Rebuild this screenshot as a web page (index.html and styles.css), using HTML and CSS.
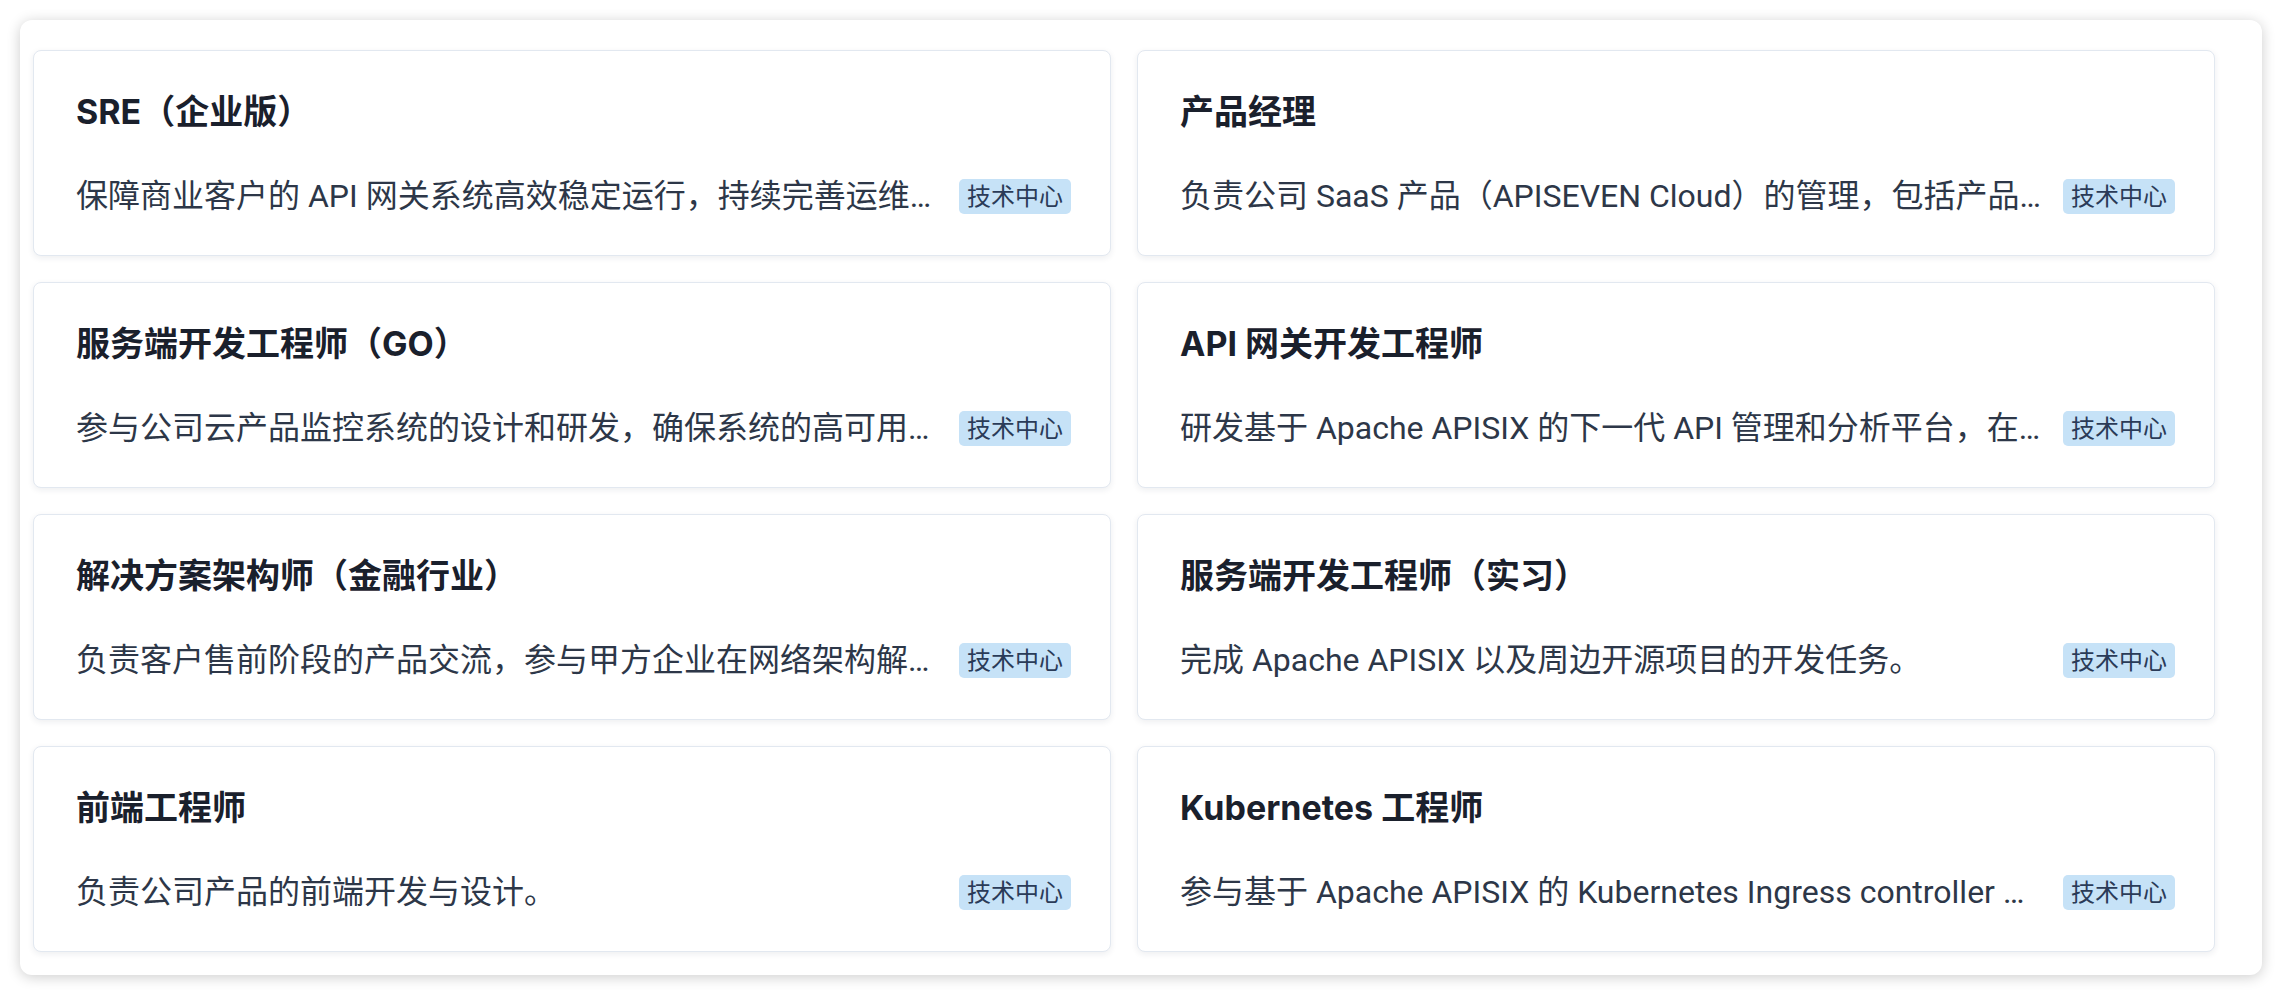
FILE: index.html
```html
<!DOCTYPE html>
<html lang="zh-CN">
<head>
<meta charset="utf-8">
<title>职位列表</title>
<link rel="stylesheet" href="styles.css">
</head>
<body>
<div class="panel">
  <div class="jobs">
    <a class="job" href="#">
      <h3 class="job-title">SRE（企业版）</h3>
      <div class="job-row">
        <p class="job-desc">保障商业客户的 API 网关系统高效稳定运行，持续完善运维体系，提升系统的可观测性与自动化水平。</p>
        <span class="tag">技术中心</span>
      </div>
    </a>
    <a class="job" href="#">
      <h3 class="job-title">产品经理</h3>
      <div class="job-row">
        <p class="job-desc">负责公司 SaaS 产品（APISEVEN Cloud）的管理，包括产品规划、需求分析与迭代推进。</p>
        <span class="tag">技术中心</span>
      </div>
    </a>
    <a class="job" href="#">
      <h3 class="job-title">服务端开发工程师（GO）</h3>
      <div class="job-row">
        <p class="job-desc">参与公司云产品监控系统的设计和研发，确保系统的高可用、高性能与可扩展性。</p>
        <span class="tag">技术中心</span>
      </div>
    </a>
    <a class="job" href="#">
      <h3 class="job-title">API 网关开发工程师</h3>
      <div class="job-row">
        <p class="job-desc">研发基于 Apache APISIX 的下一代 API 管理和分析平台，在云原生场景下持续演进。</p>
        <span class="tag">技术中心</span>
      </div>
    </a>
    <a class="job" href="#">
      <h3 class="job-title">解决方案架构师（金融行业）</h3>
      <div class="job-row">
        <p class="job-desc">负责客户售前阶段的产品交流，参与甲方企业在网络架构解决方案上的设计与落地。</p>
        <span class="tag">技术中心</span>
      </div>
    </a>
    <a class="job" href="#">
      <h3 class="job-title">服务端开发工程师（实习）</h3>
      <div class="job-row">
        <p class="job-desc">完成 Apache APISIX 以及周边开源项目的开发任务。</p>
        <span class="tag">技术中心</span>
      </div>
    </a>
    <a class="job" href="#">
      <h3 class="job-title">前端工程师</h3>
      <div class="job-row">
        <p class="job-desc">负责公司产品的前端开发与设计。</p>
        <span class="tag">技术中心</span>
      </div>
    </a>
    <a class="job" href="#">
      <h3 class="job-title">Kubernetes 工程师</h3>
      <div class="job-row">
        <p class="job-desc">参与基于 Apache APISIX 的 Kubernetes Ingress controller 的设计与开发工作。</p>
        <span class="tag">技术中心</span>
      </div>
    </a>
  </div>
</div>
</body>
</html>
```

FILE: styles.css
```css
* {
  box-sizing: border-box;
}

html, body {
  margin: 0;
  padding: 0;
  background: #ffffff;
}

body {
  font-family: "Inter", "Noto Sans CJK SC", sans-serif;
  color: #1a202c;
  padding: 20px 20px 20px 20px;
}

.panel {
  background: #ffffff;
  border-radius: 12px;
  box-shadow: 0 2px 14px rgba(0, 0, 0, 0.2);
  padding: 30px 47px 23px 13px;
}

.jobs {
  display: grid;
  grid-template-columns: 1fr 1fr;
  column-gap: 26px;
  row-gap: 26px;
}

.job {
  display: block;
  text-decoration: none;
  color: inherit;
  background: #ffffff;
  border: 1px solid #e2e8f0;
  border-radius: 8px;
  box-shadow: 0 2px 6px rgba(30, 41, 59, 0.08);
  padding: 36px 39px 35px 42px;
  min-width: 0;
}

.job-title {
  margin: 0 0 35px;
  font-size: 34px;
  font-weight: 700;
  line-height: 50px;
  color: #1a202c;
}

.job-row {
  display: flex;
  align-items: center;
  gap: 14px;
  height: 48px;
}

.job-desc {
  flex: 1;
  min-width: 0;
  margin: 0;
  font-family: "Roboto", "Noto Sans CJK SC", sans-serif;
  font-size: 32px;
  line-height: 48px;
  color: #2d3748;
  white-space: nowrap;
  overflow: hidden;
  text-overflow: ellipsis;
}

.tag {
  flex: none;
  font-size: 24px;
  line-height: 35px;
  height: 35px;
  padding: 0 8px;
  border-radius: 5px;
  background: #c6e2f7;
  color: #2a3b58;
}
```
